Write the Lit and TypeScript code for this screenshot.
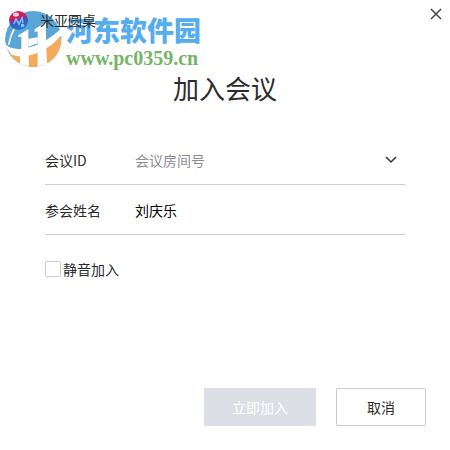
import { LitElement, html, css, svg } from "lit";
import { customElement, state } from "lit/decorators.js";

const siteLogo = svg`
  <defs>
    <clipPath id="disc"><ellipse cx="100" cy="117" rx="84" ry="84"/></clipPath>
  </defs>
  <g clip-path="url(#disc)">
    <rect x="10" y="30" width="180" height="175" fill="#5aa6d8"/>
    <path d="M10 150 Q60 176 110 158 Q160 138 190 98 L190 210 L10 210Z" fill="#f6ab5c"/>
    <path d="M55 106 L85 88 L85 150 L87 210 L60 210 L60 150 L64 150 L64 110 L55 112Z" fill="#fff"/>
    <path d="M104 88 L138 66 L138 130 L142 210 L113 210 L113 94 L104 96Z" fill="#fff"/>
    <path d="M85 116 L113 112 L113 130 L85 140Z" fill="#fff"/>
    <path d="M10 130 Q20 86 66 62 Q38 94 34 134 L24 140Z" fill="#5aa6d8"/>
    <path d="M66 62 Q36 82 26 134" fill="none" stroke="#fff" stroke-width="5"/>
  </g>
  <path d="M14 130 Q28 148 60 147 Q100 143 136 122 Q162 106 186 84 Q188 98 184 106 Q154 142 110 160 Q66 176 36 164 Q20 150 14 130Z" fill="#fff"/>`;

@customElement("app-root")
export class AppRoot extends LitElement {
  @state() private room = "";

  static styles = css`
    :host {
      display: block;
      min-height: 100vh;
      background: #fff;
      color: #2c2c2c;
      font: 14px/20px "Noto Sans CJK SC", sans-serif;
    }
    * { box-sizing: border-box; }
    button, input { font: inherit; color: inherit; margin: 0; }
    .window {
      position: relative;
      display: flex;
      flex-direction: column;
      min-height: 100vh;
    }
    .bar {
      display: flex;
      align-items: flex-start;
      justify-content: space-between;
      padding: 8px 8px 0;
    }
    .brand { display: flex; gap: 12px; height: 24px; align-items: center; }
    .app { width: 20px; height: 20px; }
    .close {
      display: flex;
      padding: 0;
      border: 0;
      background: none;
    }
    .mark {
      position: absolute;
      top: 0;
      left: 0;
      display: flex;
      pointer-events: none;
    }
    .logo { width: 66px; height: 70px; }
    .site {
      display: flex;
      flex-direction: column;
      padding-top: 14px;
      white-space: nowrap;
    }
    .name { font-size: 27px; font-weight: 900; line-height: 32px; color: #55acee; }
    .url {
      font: bold 20px/24px "Liberation Serif", serif;
      color: #75b566;
    }
    .brand, .close { position: relative; }
    h1 {
      margin: 36px 0 0;
      font-size: 26px;
      line-height: 40px;
      font-weight: 400;
      text-align: center;
    }
    form {
      flex: 1;
      display: flex;
      flex-direction: column;
      padding: 27px 24px 24px 45px;
    }
    .row {
      display: flex;
      align-items: center;
      height: 50px;
      margin-right: 21px;
      border-bottom: 1px solid #ccc;
    }
    .row label { width: 90px; }
    .row input {
      flex: 1;
      min-width: 0;
      padding: 0;
      border: 0;
      outline: 0;
      background: none;
      color: #000;
    }
    .row input::placeholder { color: #8c8c94; opacity: 1; }
    .drop {
      display: flex;
      padding: 0 8px;
      border: 0;
      background: none;
    }
    .mute {
      display: flex;
      align-items: center;
      gap: 2px;
      align-self: flex-start;
      margin-top: 24px;
    }
    .mute input {
      appearance: none;
      width: 16px;
      height: 16px;
      margin: 0;
      border: 1px solid #ccc;
      border-radius: 2px;
      background: #fff;
    }
    .mute input:checked { background: #55acee; }
    .actions {
      display: flex;
      justify-content: flex-end;
      gap: 20px;
      margin-top: auto;
    }
    .actions button {
      width: 90px;
      height: 38px;
      padding: 0;
      border: 1px solid #ccc;
      border-radius: 1px;
      background: #fff;
    }
    .actions .join {
      width: 112px;
      border-color: #dcdfe6;
      background: #dcdfe6;
      color: #fff;
    }
  `;

  render() {
    return html`
      <main class="window">
        <div class="mark">
          <svg class="logo" viewBox="0 0 198 210" aria-hidden="true">${siteLogo}</svg>
          <div class="site">
            <span class="name">河东软件园</span>
            <span class="url">www.pc0359.cn</span>
          </div>
        </div>
        <header class="bar">
          <div class="brand">
            <svg class="app" viewBox="0 0 20 20" aria-hidden="true">
              <defs>
                <linearGradient id="ball" x1="0.3" y1="0" x2="0.6" y2="1">
                  <stop offset="0" stop-color="#e5124f"/>
                  <stop offset="0.35" stop-color="#d01c60"/>
                  <stop offset="0.55" stop-color="#3858b8"/>
                  <stop offset="1" stop-color="#2478d8"/>
                </linearGradient>
              </defs>
              <circle cx="10.5" cy="10.5" r="9.5" fill="url(#ball)"/>
              <ellipse cx="8" cy="4.5" rx="3" ry="2" fill="#fff" opacity=".8"/>
              <path d="M6 14 L8 9 L11 14 L14 8 L15 13" fill="none" stroke="#83b9ef" stroke-width="1.6"/>
              <circle cx="14.5" cy="15.5" r="1.8" fill="#8cc4f8"/>
            </svg>
            <span>米亚圆桌</span>
          </div>
          <button class="close" type="button" aria-label="关闭">
            <svg width="12" height="12" viewBox="0 0 12 12"><path d="M1 1 L11 11 M11 1 L1 11" stroke="#444" stroke-width="1.5"/></svg>
          </button>
        </header>
        <h1>加入会议</h1>
        <form @submit=${(e: Event) => e.preventDefault()}>
          <div class="row">
            <label for="room">会议ID</label>
            <input id="room" placeholder="会议房间号" .value=${this.room}
              @input=${(e: Event) => (this.room = (e.target as HTMLInputElement).value)}>
            <button class="drop" type="button" aria-label="展开">
              <svg width="12" height="8" viewBox="0 0 12 8"><path d="M1 1 L6 6 L11 1" fill="none" stroke="#333" stroke-width="1.5"/></svg>
            </button>
          </div>
          <div class="row">
            <label for="name">参会姓名</label>
            <input id="name" value="刘庆乐">
          </div>
          <label class="mute"><input type="checkbox">静音加入</label>
          <div class="actions">
            <button class="join" type="submit" ?disabled=${!this.room}>立即加入</button>
            <button type="button">取消</button>
          </div>
        </form>
      </main>`;
  }
}
